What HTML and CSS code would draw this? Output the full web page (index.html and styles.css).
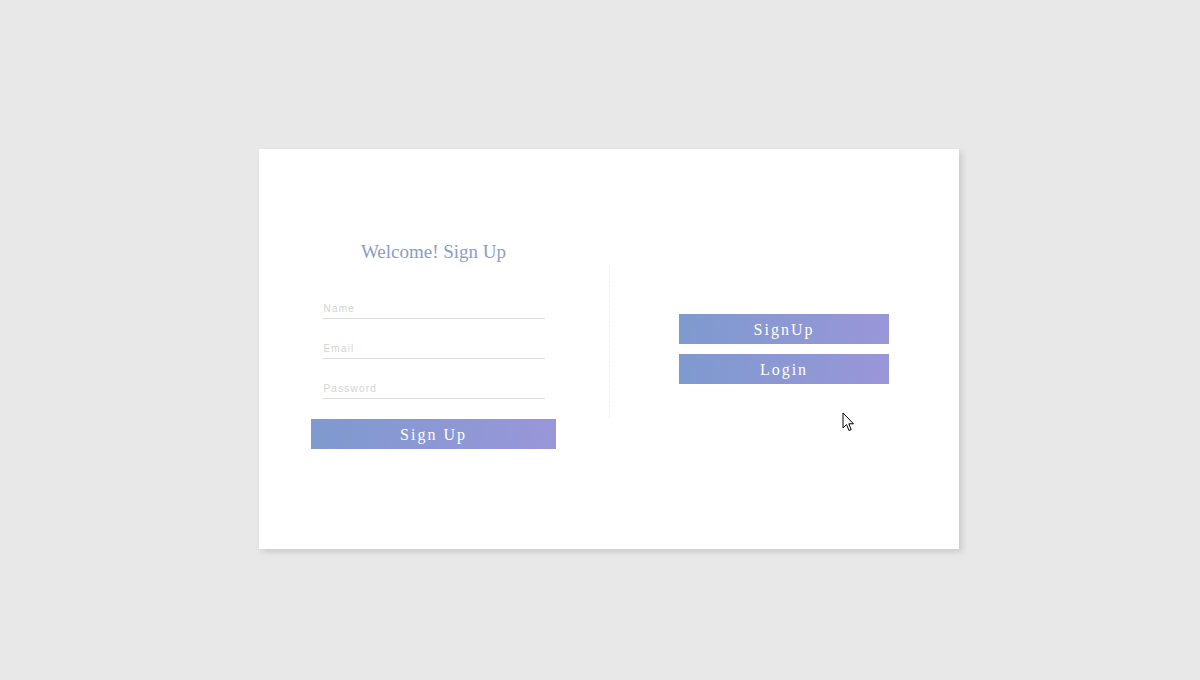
FILE: index.html
```html
<!DOCTYPE html>
<html>
<head>
<meta charset="utf-8">
<link rel="stylesheet" href="styles.css">
</head>
<body>
<div class="card">
  <div class="panel panel-left">
    <h2 class="title">Welcome! Sign Up</h2>
    <form class="form">
      <input class="field" type="text" placeholder="Name">
      <input class="field" type="email" placeholder="Email">
      <input class="field" type="password" placeholder="Password">
      <button class="btn btn-wide" type="button">Sign Up</button>
    </form>
  </div>
  <div class="divider"></div>
  <div class="panel panel-right">
    <button class="btn btn-side" type="button">SignUp</button>
    <button class="btn btn-side" type="button">Login</button>
  </div>
</div>
<svg class="cursor" width="14" height="21" viewBox="0 0 14 21">
  <path d="M1 1 L1 16 L4.5 12.5 L7 18.5 L9.2 17.6 L6.8 11.8 L11.5 11.8 Z" fill="#fff" stroke="#000" stroke-width="1" stroke-linejoin="miter"/>
</svg>
</body>
</html>
```
FILE: styles.css
```css
html, body {
  margin: 0;
  padding: 0;
}
body {
  background: #e8e8e8;
  width: 1200px;
  height: 680px;
  overflow: hidden;
  position: relative;
  font-family: "Liberation Serif", serif;
}
.card {
  margin: 149px 0 0 259px;
  width: 700px;
  height: 400px;
  background: #fff;
  box-shadow: 3px 3px 6px rgba(0, 0, 0, 0.13);
  display: flex;
  align-items: stretch;
}
.panel {
  display: flex;
  flex-direction: column;
  align-items: center;
}
.panel-left {
  width: 349px;
  padding-top: 91px;
  box-sizing: border-box;
}
.title {
  margin: 0;
  font-family: "Liberation Serif", serif;
  font-weight: normal;
  font-size: 19px;
  line-height: 24px;
  color: #8b9cc8;
}
.form {
  display: flex;
  flex-direction: column;
  align-items: center;
  margin-top: 34px;
}
.field {
  width: 222px;
  height: 21px;
  box-sizing: border-box;
  border: none;
  border-bottom: 1px solid #dedede;
  padding: 1px 0 0 1px;
  margin: 0 0 19px 0;
  outline: none;
  font-family: "Liberation Sans", sans-serif;
  font-size: 10px;
  letter-spacing: 1.2px;
  color: #999;
  background: transparent;
}
.field::placeholder {
  color: #d4d4d4;
}
.btn {
  border: none;
  height: 30px;
  padding: 2px 0 0 0;
  margin: 0;
  color: #fff;
  font-family: "Liberation Serif", serif;
  font-size: 16px;
  letter-spacing: 2px;
  background: linear-gradient(100deg, #7e9acf, #9a96d9);
  cursor: pointer;
}
.btn-wide {
  width: 245px;
  margin-top: 1px;
}
.divider {
  width: 0;
  height: 153px;
  align-self: flex-start;
  margin: 116px 0 0 1px;
  border-left: 1px dashed #f0f0f0;
}
.panel-right {
  flex: 1;
  justify-content: center;
  gap: 10px;
  padding-right: 1px;
}
.btn-side {
  width: 210px;
}
.cursor {
  position: absolute;
  left: 842px;
  top: 412px;
}
```
